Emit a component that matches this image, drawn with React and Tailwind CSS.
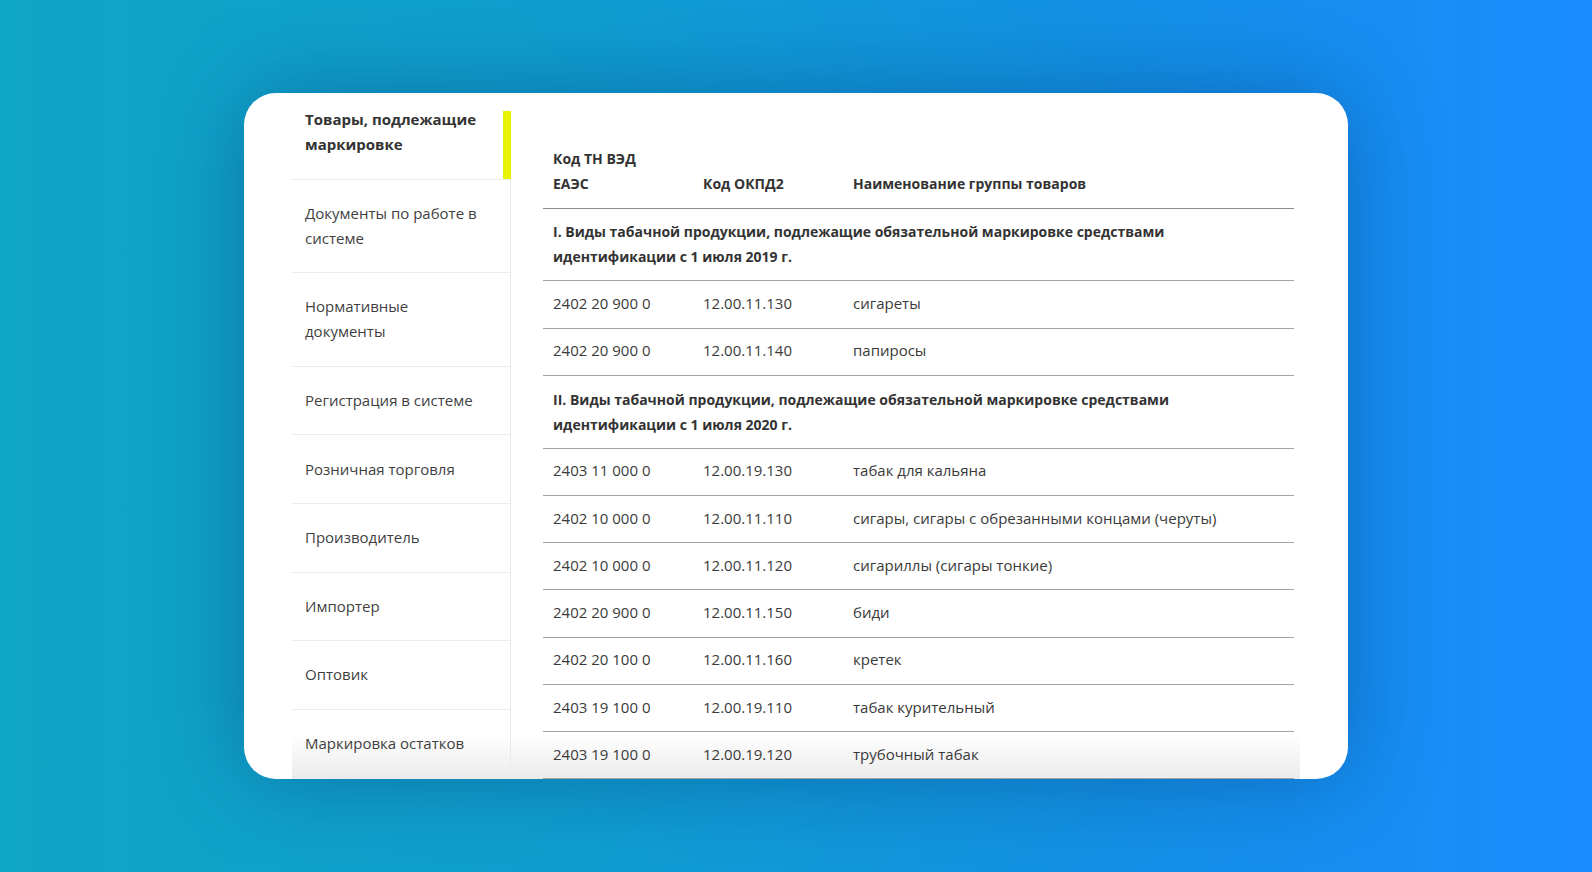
import React from "react";

const side = [
  { lines: ["Товары, подлежащие", "маркировке"], active: true },
  { lines: ["Документы по работе в", "системе"] },
  { lines: ["Нормативные", "документы"] },
  { lines: ["Регистрация в системе"] },
  { lines: ["Розничная торговля"] },
  { lines: ["Производитель"] },
  { lines: ["Импортер"] },
  { lines: ["Оптовик"] },
  { lines: ["Маркировка остатков"] },
];

const rows = [
  { section: ["I. Виды табачной продукции, подлежащие обязательной маркировке средствами", "идентификации с 1 июля 2019 г."] },
  { c: ["2402 20 900 0", "12.00.11.130", "сигареты"] },
  { c: ["2402 20 900 0", "12.00.11.140", "папиросы"] },
  { section: ["II. Виды табачной продукции, подлежащие обязательной маркировке средствами", "идентификации с 1 июля 2020 г."] },
  { c: ["2403 11 000 0", "12.00.19.130", "табак для кальяна"] },
  { c: ["2402 10 000 0", "12.00.11.110", "сигары, сигары с обрезанными концами (черуты)"] },
  { c: ["2402 10 000 0", "12.00.11.120", "сигариллы (сигары тонкие)"] },
  { c: ["2402 20 900 0", "12.00.11.150", "биди"] },
  { c: ["2402 20 100 0", "12.00.11.160", "кретек"] },
  { c: ["2403 19 100 0", "12.00.19.110", "табак курительный"] },
  { c: ["2403 19 100 0", "12.00.19.120", "трубочный табак"] },
];

export default function App() {
  return (
    <div
      className="w-full h-[872px] flex items-center justify-center bg-[linear-gradient(90deg,#0fa5c6_0%,#0f9fcf_35%,#1391e6_70%,#1a8cff_100%)]"
      style={{ fontFamily: '"Open Sans", "Noto Sans", sans-serif' }}
    >
      <div className="relative w-[1104px] h-[686px] bg-white rounded-[32px] overflow-hidden shadow-[0_0_90px_rgba(8,60,120,0.45)]">
        <div className="absolute z-0 left-[48px] w-[1008px] bottom-0 h-[46px] bg-gradient-to-b from-[rgba(236,236,236,0)] to-[#ebebeb]" />
        <div className="relative z-10 flex mt-[-7px] ml-[48px] w-[1008px]">
          {/* Sidebar */}
          <div className="w-[219px] shrink-0 flex flex-col">
            {side.map((s, i) => (
              <div
                key={i}
                className={
                  "relative px-[13px] py-[21.3px] text-[15px] leading-[25px] border-b border-[#ececec] " +
                  (s.active
                    ? "font-bold text-[14px] text-[#333333] border-r-0"
                    : "text-[#3f3f3f] border-r border-r-[#eaeaea]")
                }
              >
                {s.lines.map((l, j) => (
                  <div key={j}>{l}</div>
                ))}
                {s.active && (
                  <div className="absolute right-0 top-[25px] bottom-0 w-[8px] bg-[#e8f300]" />
                )}
              </div>
            ))}
          </div>
          {/* Table */}
          <div className="flex-1 pl-[32px] pt-[49px]">
            <table className="table-fixed w-[751px] border-collapse text-[15px] leading-[25px] text-[#3a3a3a]">
              <colgroup>
                <col className="w-[150px]" />
                <col className="w-[150px]" />
                <col />
              </colgroup>
              <thead>
                <tr className="border-b border-[#8c8c8c]">
                  <th className="text-left align-bottom font-bold text-[14px] px-[10px] pt-[11px] pb-[11.5px] text-[#333333]">
                    Код ТН ВЭД<br />ЕАЭС
                  </th>
                  <th className="text-left align-bottom font-bold text-[14px] px-[10px] pt-[11px] pb-[11.5px] text-[#333333]">
                    Код ОКПД2
                  </th>
                  <th className="text-left align-bottom font-bold text-[14px] px-[10px] pt-[11px] pb-[11.5px] text-[#333333]">
                    Наименование группы товаров
                  </th>
                </tr>
              </thead>
              <tbody>
                {rows.map((r, i) =>
                  r.section ? (
                    <tr key={i} className="border-b border-[#a3a3a3]">
                      <td colSpan={3} className="px-[10px] pt-[10.75px] pb-[11px] font-bold text-[14px] text-[#333333]">
                        {r.section[0]}
                        <br />
                        {r.section[1]}
                      </td>
                    </tr>
                  ) : (
                    <tr key={i} className="border-b border-[#a3a3a3]">
                      {r.c.map((v, j) => (
                        <td key={j} className="px-[10px] pt-[9.75px] pb-[11.5px] whitespace-nowrap">
                          {v}
                        </td>
                      ))}
                    </tr>
                  )
                )}
              </tbody>
            </table>
          </div>
        </div>
      </div>
    </div>
  );
}
